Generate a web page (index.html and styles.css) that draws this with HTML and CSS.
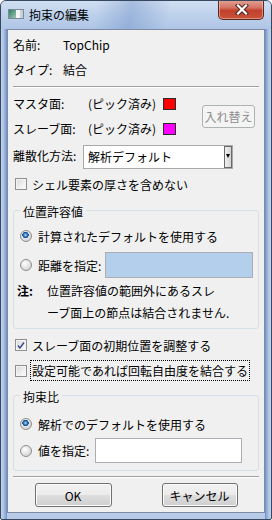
FILE: index.html
```html
<!DOCTYPE html>
<html lang="ja">
	<head>
		<meta charset="UTF-8" />
		<meta name="viewport" content="width=device-width, initial-scale=1.0" />
		<title>拘束の編集</title>
		<link rel="stylesheet" href="styles.css">
	</head>
	<body>
		<div class="window">
			<div class="titlebar">
				<svg class="app-icon" width="16" height="10" viewBox="0 0 16 10">
					<defs>
						<linearGradient id="pane" x1="0" y1="0" x2="1" y2="1">
							<stop offset="0" stop-color="#2c7d63" />
							<stop offset="1" stop-color="#9cc8b4" />
						</linearGradient>
					</defs>
					<rect x="0.5" y="0.5" width="15" height="9" fill="#f3f5f7" stroke="#7d8997" />
					<rect x="1" y="1" width="7" height="8" fill="url(#pane)" />
					<rect x="12" y="1" width="3" height="8" fill="#c9d0d8" />
				</svg>
				<span class="title">拘束の編集</span>
				<div class="close">
					<svg width="14" height="11" viewBox="0 0 14 11">
						<path d="M3 1.5 L11 9.5 M11 1.5 L3 9.5" stroke="#4b2622" stroke-width="4.2" stroke-linecap="square" fill="none" />
						<path d="M3 1.5 L11 9.5 M11 1.5 L3 9.5" stroke="#ffffff" stroke-width="2.2" stroke-linecap="square" fill="none" />
					</svg>
				</div>
			</div>

			<div class="client">
				<div class="info">
					<div class="info-row"><span class="info-label">名前:</span><span>TopChip</span></div>
					<div class="info-row"><span class="info-label">タイプ:</span><span>結合</span></div>
				</div>

				<div class="sep"></div>

				<div class="faces">
					<span class="face-label">マスタ面:</span>
					<span>(ピック済み)</span>
					<span class="swatch red"></span>
					<button class="btn swap" disabled>入れ替え</button>
					<span class="face-label">スレーブ面:</span>
					<span>(ピック済み)</span>
					<span class="swatch magenta"></span>
				</div>

				<div class="combo-row">
					<span class="combo-label">離散化方法:</span>
					<div class="combo">
						<span>解析デフォルト</span>
						<span class="drop"></span>
					</div>
				</div>

				<div class="check-row first">
					<span class="checkbox"></span>
					<span>シェル要素の厚さを含めない</span>
				</div>

				<fieldset class="group tol">
					<legend>位置許容値</legend>
					<div class="radio-row">
						<span class="radio on"></span>
						<span>計算されたデフォルトを使用する</span>
					</div>
					<div class="radio-row field">
						<span class="radio"></span>
						<span>距離を指定:</span>
						<span class="textbox selected wide"></span>
					</div>
					<div class="note">
						<b>注:</b>
						<span>位置許容値の範囲外にあるスレ<br />ーブ面上の節点は結合されません.</span>
					</div>
				</fieldset>

				<div class="check-row adjust">
					<span class="checkbox checked">
						<svg width="11" height="11" viewBox="0 0 11 11">
							<path d="M2.2 5.6 L4.3 8.3 L8.8 2.2" stroke="#3c4f8e" stroke-width="1.7" fill="none" />
						</svg>
					</span>
					<span>スレーブ面の初期位置を調整する</span>
				</div>
				<div class="check-row rot">
					<span class="checkbox"></span>
					<span class="focus">設定可能であれば回転自由度を結合する</span>
				</div>

				<fieldset class="group ratio">
					<legend>拘束比</legend>
					<div class="radio-row">
						<span class="radio on"></span>
						<span>解析でのデフォルトを使用する</span>
					</div>
					<div class="radio-row field">
						<span class="radio"></span>
						<span>値を指定:</span>
						<span class="textbox"></span>
					</div>
				</fieldset>

				<div class="sep bottom"></div>

				<div class="actions">
					<button class="btn ok">OK</button>
					<button class="btn cancel">キャンセル</button>
				</div>
			</div>
		</div>
	</body>
</html>
```

FILE: styles.css
```css
* {
	box-sizing: border-box;
}

body {
	margin: 0;
	background: #ffffff;
	font-family: "Noto Sans CJK JP", "Noto Sans", sans-serif;
	font-size: 12px;
	color: #000000;
}

.window {
	display: flex;
	flex-direction: column;
	width: 272px;
	height: 520px;
	border: 1px solid #37475e;
	border-radius: 6px 6px 2px 2px;
	background:
		linear-gradient(90deg, #c4d4ec 0, #a7bee2 3px, #6d8fc9 6px, rgba(0, 0, 0, 0) 6px),
		linear-gradient(270deg, #c4d4ec 0, #a7bee2 3px, #6d8fc9 6px, rgba(0, 0, 0, 0) 6px),
		#b7cbe8;
	overflow: hidden;
}

/* title bar */
.titlebar {
	display: flex;
	align-items: flex-start;
	height: 28px;
	padding-left: 7px;
	background:
		linear-gradient(100deg, rgba(255, 255, 255, 0) 35%, rgba(95, 130, 190, 0.35) 48%, rgba(255, 255, 255, 0) 62%),
		linear-gradient(180deg, #d0def1 0, #bfd2ec 45%, #afc6e6 100%);
}

.app-icon {
	margin-top: 8px;
}

.title {
	margin-top: 6px;
	margin-left: 5px;
	line-height: 16px;
	font-size: 12px;
}

.close {
	display: flex;
	align-items: center;
	justify-content: center;
	width: 46px;
	height: 20px;
	margin: -1px 7px 0 auto;
	padding-left: 2px;
	border: 1px solid #5d2620;
	border-top: none;
	border-radius: 0 0 5px 5px;
	background: linear-gradient(180deg, #e2a496 0, #d37363 40%, #c2412c 55%, #c9523a 100%);
	box-shadow: inset 0 0 0 1px rgba(255, 220, 210, 0.45);
}

/* client area */
.client {
	flex: 1;
	margin: 0 6px 6px 6px;
	padding: 2px 5px 0 5px;
	border: 1px solid #7c8ba3;
	background: #f0f0f0;
	white-space: nowrap;
}

.info-row {
	display: flex;
	align-items: center;
	height: 25px;
}

.info-label {
	width: 50px;
}

.sep {
	margin-top: 4px;
	height: 2px;
	border-top: 1px solid #a0a0a0;
	border-bottom: 1px solid #ffffff;
}

.faces {
	display: grid;
	grid-template-columns: 75px auto 13px 1fr;
	grid-template-rows: 25px 25px;
	align-items: center;
	margin-top: 3px;
}

.swatch {
	width: 13px;
	height: 12px;
	border: 1px solid #2b2b2b;
}

.faces span:nth-child(2),
.faces span:nth-child(6) {
	margin-right: 7px;
}

.red {
	background: #ff0000;
}

.magenta {
	background: #ff00ff;
}

.btn {
	font-family: "Noto Sans CJK JP", "Noto Sans", sans-serif;
	font-size: 12px;
	color: #000000;
	padding: 0;
	border: 1px solid #707070;
	border-radius: 3px;
	background: linear-gradient(180deg, #f2f2f2 0, #ebebeb 50%, #dddddd 52%, #cfcfcf 100%);
	box-shadow: inset 0 0 0 1px #fbfbfb;
}

.swap {
	grid-column: 4;
	grid-row: 1 / 3;
	justify-self: end;
	align-self: start;
	width: 53px;
	height: 23px;
	margin-top: 14px;
	margin-right: 4px;
	border-color: #adb2b5;
	background: #f4f4f4;
	box-shadow: none;
	color: #8d8d8d;
}

.combo-row {
	display: flex;
	align-items: flex-start;
	margin-top: 4px;
	height: 24px;
}

.combo-label {
	width: 70px;
	line-height: 21px;
}

.combo {
	position: relative;
	width: 150px;
	height: 24px;
	padding-left: 4px;
	line-height: 21px;
	border: 1px solid #a9a9a9;
	background: #ffffff;
}

.drop {
	position: absolute;
	right: 0;
	top: 0;
	width: 8px;
	height: 22px;
	border: 1px solid #6a6a6a;
	background: linear-gradient(90deg, #f0f0f0, #d4d4d4);
}

.drop::after {
	content: "";
	position: absolute;
	left: 1px;
	top: 7px;
	border-left: 2.5px solid transparent;
	border-right: 2.5px solid transparent;
	border-top: 4px solid #000000;
}

/* checkboxes and radios */
.check-row {
	display: flex;
	align-items: center;
	padding-left: 2px;
}

.check-row.first {
	height: 22px;
	margin-top: 4px;
}

.check-row.adjust {
	height: 24px;
	margin-top: 4px;
}

.check-row.rot {
	height: 21px;
	margin-top: 3px;
}

.checkbox {
	display: flex;
	flex-shrink: 0;
	align-items: center;
	justify-content: center;
	width: 12px;
	height: 12px;
	margin-right: 5px;
	border: 1px solid #8e8f8f;
	background: linear-gradient(135deg, #d6d6d6 0, #f0f0f0 60%, #ffffff 100%);
	box-shadow: inset 0 0 0 1px #f4f4f4;
}

.focus {
	height: 21px;
	line-height: 19px;
	padding: 0 1px;
	margin-left: -2px;
	border: 1px dotted #000000;
}

.radio {
	flex-shrink: 0;
	width: 12px;
	height: 12px;
	margin-right: 6px;
	border-radius: 50%;
	border: 1px solid #8d8d8d;
	background: radial-gradient(circle at 40% 35%, #ffffff 0, #e6e6e6 45%, #c8c8c8 100%);
}

.radio.on {
	background:
		radial-gradient(circle at 45% 40%, #bfe3ff 0, #3b8ad0 1.5px, #16427e 3px, rgba(0, 0, 0, 0) 3.4px),
		radial-gradient(circle at 40% 35%, #ffffff 0, #e6e6e6 45%, #c8c8c8 100%);
}

/* group boxes */
.group {
	margin: 0;
	min-inline-size: 0;
	padding: 0 3px 4px 6px;
	border: 1px solid #d5dfe5;
	border-radius: 3px;
}

.group legend {
	padding: 4px 3px 0 3px;
	line-height: 14px;
}

.group.tol {
	margin-top: 6px;
	padding-top: 5px;
}

.group.ratio {
	margin-top: 5px;
	padding-top: 8px;
	padding-bottom: 7px;
}

.radio-row {
	display: flex;
	align-items: center;
	height: 24px;
}

.radio-row.field {
	height: 26px;
	margin-top: 4px;
}

.ratio .radio-row.field {
	height: 25px;
	margin-top: 2px;
}

.textbox {
	flex-shrink: 0;
	width: 147px;
	height: 100%;
	margin-left: 6px;
	border: 1px solid #abadb3;
	background: #ffffff;
}

.textbox.wide {
	width: 148px;
	margin-left: 4px;
}

.textbox.selected {
	background: #b3cfec;
}

.note {
	display: grid;
	grid-template-columns: 30px auto;
	margin: 2px 0 0 -3px;
	line-height: 22px;
}

.note b {
	font-weight: 700;
}

.sep.bottom {
	margin-top: 5px;
}

.actions {
	display: flex;
	justify-content: center;
	gap: 50px;
	margin-top: 5px;
}

.actions .btn {
	height: 24px;
}

.ok {
	width: 77px;
}

.cancel {
	width: 76px;
}
```
